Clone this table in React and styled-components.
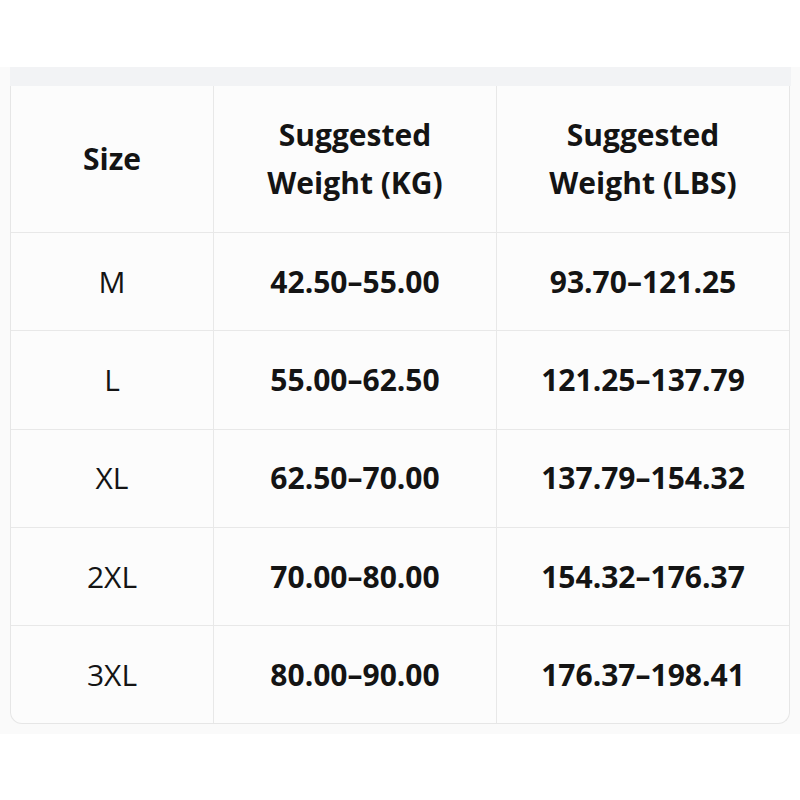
import React from "react";
import styled, { createGlobalStyle } from "styled-components";

const Global = createGlobalStyle`
  html, body { margin: 0; padding: 0; background: #ffffff; }
  body { font-family: "Open Sans", "Noto Sans", sans-serif; color: #111; }
`;

const Page = styled.div`
  padding-top: 67px;
  width: 800px;
`;

const Section = styled.div`
  background: #fafafa;
  padding: 0 10px 10px 10px;
`;

const Band = styled.div`
  height: 19px;
  background: #f2f3f5;
  margin-right: -1px;
`;

const Table = styled.div`
  display: grid;
  grid-template-columns: 203px 283px 1fr;
  background: #fcfcfc;
  border: 1px solid #e6e6e6;
  border-top: none;
  border-radius: 0 0 12px 12px;
  overflow: hidden;
`;

const Cell = styled.div`
  display: flex;
  align-items: center;
  justify-content: center;
  text-align: center;
  height: ${(p) => (p.$head ? "146px" : "97.3px")};
  border-bottom: ${(p) => (p.$last ? "none" : "1px solid #e8e8e8")};
  border-right: ${(p) => (p.$end ? "none" : "1px solid #e8e8e8")};
  font-size: 30px;
  font-weight: ${(p) => (p.$bold ? 700 : 400)};
  line-height: 48px;
  color: #141414;
`;

const rows = [
  ["M", "42.50–55.00", "93.70–121.25"],
  ["L", "55.00–62.50", "121.25–137.79"],
  ["XL", "62.50–70.00", "137.79–154.32"],
  ["2XL", "70.00–80.00", "154.32–176.37"],
  ["3XL", "80.00–90.00", "176.37–198.41"],
];

export default function App() {
  return (
    <Page>
      <Global />
      <Section>
        <Band />
        <Table>
          <Cell $head $bold>Size</Cell>
          <Cell $head $bold>Suggested<br />Weight (KG)</Cell>
          <Cell $head $bold $end>Suggested<br />Weight (LBS)</Cell>
          {rows.map((r, i) => {
            const last = i === rows.length - 1;
            return (
              <React.Fragment key={r[0]}>
                <Cell $last={last}>{r[0]}</Cell>
                <Cell $last={last} $bold>{r[1]}</Cell>
                <Cell $last={last} $bold $end>{r[2]}</Cell>
              </React.Fragment>
            );
          })}
        </Table>
      </Section>
    </Page>
  );
}
